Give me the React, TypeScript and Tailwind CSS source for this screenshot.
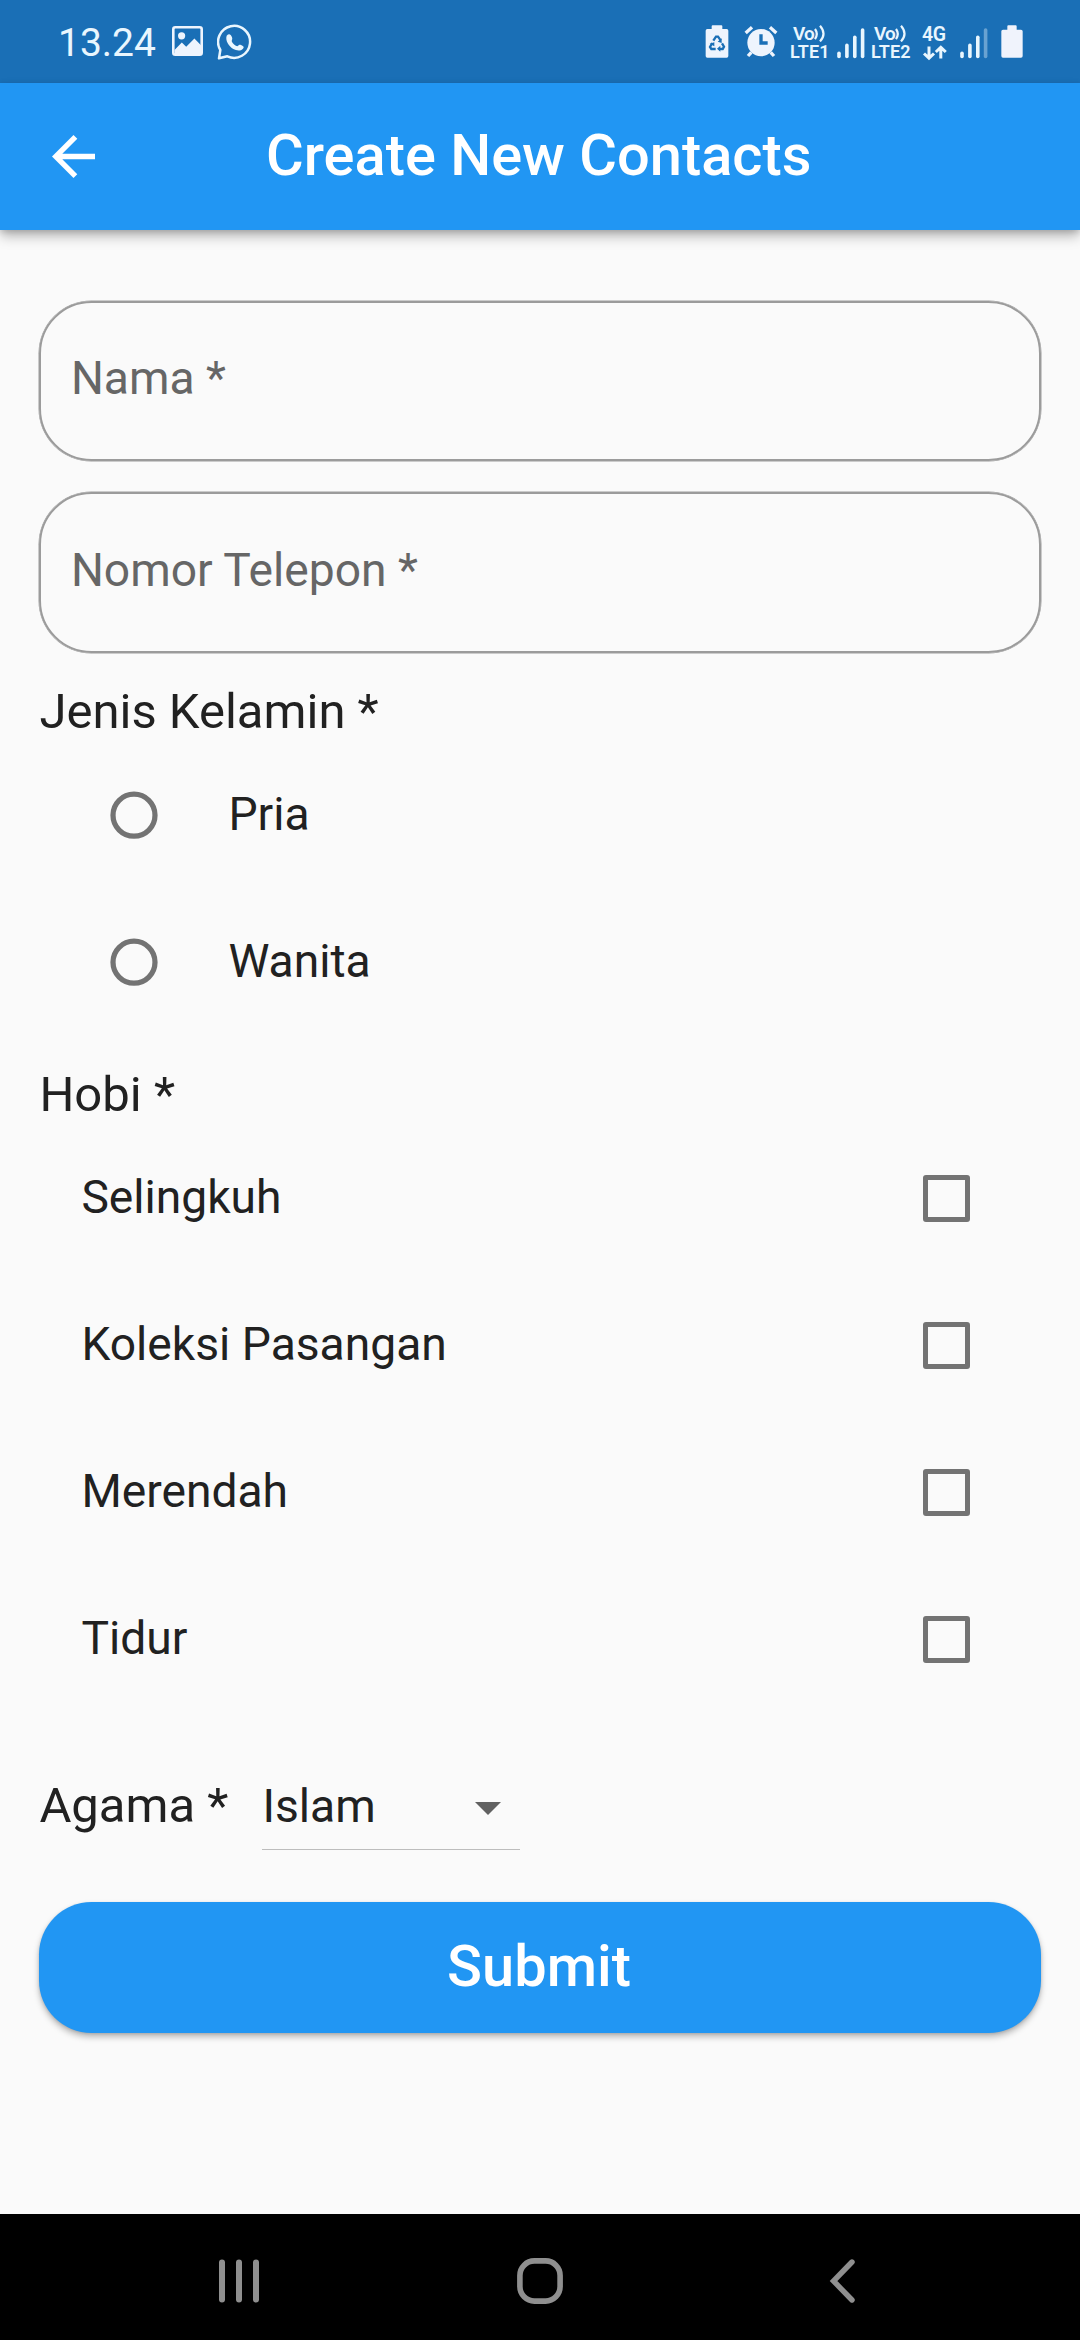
import React from "react";

function StatusImage() {
  return (
    <svg className="ml-[16px] h-[30px] w-[31px]" viewBox="0 0 31 30">
      <rect x="1.3" y="1.3" width="28.4" height="27.4" rx="2" fill="none" stroke="#eef4fd" strokeWidth="2.6" />
      <circle cx="9.6" cy="9.8" r="3.6" fill="#eef4fd" />
      <path d="M2.5 24 L9.8 16.4 L14.2 20.8 L22.4 12.6 L29 19.2 V28.5 H2.5Z" fill="#eef4fd" />
    </svg>
  );
}

function StatusWhatsapp() {
  return (
    <svg className="ml-[13.5px] h-[36px] w-[36px]" viewBox="0 0 108 108">
      <path
        d="M6 103 L10 78 A48 48 0 1 1 31 97 Z"
        fill="none"
        stroke="#e9f6fe"
        strokeWidth="7.5"
        strokeLinejoin="round"
      />
      <path
        d="M29 35 C36 28 41 30 45 40 C48 46 42 50 45 54 C49 60 55 65 61 67 C65 63 68 61 72 63 C81 68 82 69 78 74 C71 82 58 80 49 75 C36 67 24 50 29 35Z"
        fill="#e9f6fe"
      />
    </svg>
  );
}

function BatterySaver() {
  return (
    <svg className="h-[36px] w-[24px]" viewBox="0 0 72 108">
      <path d="M20 12 V4 Q20 1 23 1 H49 Q52 1 52 4 V12 H65 Q70 12 70 17 V93 Q70 98 65 98 H7 Q2 98 2 93 V17 Q2 12 7 12Z" fill="#eef4fd" />
      <g fill="none" stroke="#1a6fb6" strokeWidth="7">
        <path d="M25 47 L33 35 H39 L47 46" />
        <path d="M51 55 L57 65 L53 72 H42" />
        <path d="M32 72 H19 L15 66 L22 54" />
      </g>
      <path d="M50 40 L50 54 L38 50Z M46 62 V80 L36 71Z M14 56 L28 52 L28 64Z" fill="#1a6fb6" />
    </svg>
  );
}

function Alarm() {
  return (
    <svg className="ml-[15px] h-[36px] w-[34px]" viewBox="0 0 102 108">
      <g stroke="#eef4fd" strokeWidth="10" fill="none">
        <path d="M5 24 L24 7" />
        <path d="M78 7 L97 24" />
        <path d="M22 82 L12 93" />
        <path d="M80 82 L90 93" />
      </g>
      <circle cx="51" cy="53" r="41" fill="#eef4fd" />
      <path d="M51 28 V54 H71" fill="none" stroke="#1a6fb6" strokeWidth="10" />
    </svg>
  );
}

function VoLte({ sim, className }: { sim: string; className: string }) {
  return (
    <div className={className}>
      <div className="flex h-[17px] items-center pl-[3px]">
        <span className="text-[19px] leading-[24px] font-semibold tracking-[-1px]">Vo</span>
        <svg className="h-[17px] w-[13px] shrink-0" viewBox="0 0 13 17" fill="none" stroke="#e9f6fe" strokeWidth="2.2">
          <path d="M1 4 Q4.6 9 1 14.2" />
          <path d="M6 0.8 Q13 8.8 6 16.4" />
        </svg>
      </div>
      <div className="text-[18px] leading-[19px] font-semibold tracking-[0.1px] whitespace-nowrap">{`LTE${sim}`}</div>
    </div>
  );
}

function Signal({ className, weak }: { className: string; weak?: boolean }) {
  return (
    <svg className={className} viewBox="0 0 28 36" stroke="#e9f6fe" strokeWidth="3.6" strokeLinecap="round">
      <path d="M2 28.2 V31.4" />
      <path d="M9.9 20.4 V31.4" />
      <path d="M17.8 12.2 V31.4" />
      <path d="M25.6 5 V31.4" opacity={weak ? 0.38 : 1} />
    </svg>
  );
}

function FourG() {
  return (
    <div className="ml-[9px] h-[36px] w-[26px] text-[#e9f6fe]">
      <div className="h-[18px] text-[19.5px] leading-[20px] font-semibold tracking-[-0.4px]">4G</div>
      <svg className="h-[18px] w-[26px]" viewBox="0 18 26 18" fill="none" stroke="#e9f6fe" strokeWidth="3">
        <path d="M7 21.5 V32.5 M2 28.5 L7 33.2 L12 28.5" />
        <path d="M18.8 33.4 V23 M13.8 27 L18.8 22.4 L23.8 27" />
      </svg>
    </div>
  );
}

function Battery() {
  return (
    <svg className="ml-[13px] h-[36px] w-[22px]" viewBox="0 0 66 108">
      <path d="M19 14 V4 Q19 1 22 1 H44 Q47 1 47 4 V14 H60 Q65 14 65 19 V93 Q65 98 60 98 H6 Q1 98 1 93 V19 Q1 14 6 14Z" fill="#f0f3fc" />
    </svg>
  );
}

function Field({ label }: { label: string }) {
  return (
    <div className="flex h-[160.5px] items-center rounded-[52.5px] border-2 border-[#9b9b9b] pb-[5px] pl-[29.5px] text-[46.2px] leading-none text-[#666666] shadow-[0_0_0_0.5px_#9b9b9b]">
      {label}
    </div>
  );
}

function Heading({ children }: { children: React.ReactNode }) {
  return <h2 className="mt-[31px] flex h-[57.5px] items-center pb-px text-[49px] leading-none">{children}</h2>;
}

function RadioRow({ label }: { label: string }) {
  return (
    <div className="flex h-[147px] items-center pl-[70.6px]">
      <svg className="h-[48px] w-[48px]" viewBox="0 0 48 48">
        <circle cx="24" cy="24.2" r="21" fill="none" stroke="#737373" strokeWidth="5.25" />
      </svg>
      <span className="mb-[2px] ml-[70.4px] text-[46.2px] leading-none">{label}</span>
    </div>
  );
}

function CheckRow({ label }: { label: string }) {
  return (
    <div className="flex h-[147px] items-center justify-between pl-[42px] pr-[70.6px]">
      <span className="text-[46.2px] leading-none">{label}</span>
      <span className="mt-[2px] h-[47.25px] w-[47.25px] rounded-[3px] border-5 border-[#737373]" />
    </div>
  );
}

export default function App() {
  return (
    <div className="flex h-[2340px] w-[1080px] flex-col overflow-hidden bg-[#fafafa] font-[Roboto,sans-serif] text-[#212121]">
      <div className="flex h-[83px] shrink-0 items-start justify-between bg-[#1a6fb6] pl-[58px] pr-[57px]">
        <div className="flex">
          <span className="mt-[23px] w-[98px] text-[39px] leading-[41px] text-[#e9f6fe]">13.24</span>
          <div className="mt-[26px]"><StatusImage /></div>
          <div className="mt-[24px]"><StatusWhatsapp /></div>
        </div>
        <div className="mt-[25px] flex">
          <BatterySaver />
          <Alarm />
          <VoLte sim="1" className="ml-[12px] h-[36px] w-[42px] text-[#e9f6fe]" />
          <Signal className="ml-[5px] h-[36px] w-[28px]" />
          <VoLte sim="2" className="ml-[6px] h-[36px] w-[42px] text-[#e9f6fe]" />
          <FourG />
          <Signal weak className="ml-[12px] h-[36px] w-[28px]" />
          <Battery />
        </div>
      </div>

      <header className="relative flex h-[147px] shrink-0 items-center bg-[#2196f3] pl-[52px] shadow-[0_7px_12px_-1px_rgba(0,0,0,0.28),0_2px_6px_rgba(0,0,0,0.14)]">
        <svg className="h-[43px] w-[43px]" viewBox="4 4 16 16" fill="#ffffff">
          <path d="M20 11H7.83l5.59-5.59L12 4l-8 8 8 8 1.41-1.41L7.83 13H20v-2z" />
        </svg>
        <h1 className="mb-px ml-[171px] text-[57.75px] leading-none font-medium whitespace-nowrap text-white">
          Create New Contacts
        </h1>
      </header>

      <main className="flex-1 px-[39.4px] pt-[70.7px]">
        <div className="flex flex-col gap-[31px]">
          <Field label="Nama *" />
          <Field label="Nomor Telepon *" />
        </div>

        <Heading>Jenis Kelamin *</Heading>
        <RadioRow label="Pria" />
        <RadioRow label="Wanita" />

        <Heading>Hobi *</Heading>
        <CheckRow label="Selingkuh" />
        <CheckRow label="Koleksi Pasangan" />
        <CheckRow label="Merendah" />
        <CheckRow label="Tidur" />

        <div className="mt-[31px] flex h-[126px] items-center">
          <span className="w-[223px] text-[49px] leading-none">Agama *</span>
          <div className="flex h-[88px] w-[258px] items-center justify-between border-b border-[#bdbdbd] pr-[19px]">
            <span className="mt-[2px] text-[46.2px] leading-none">Islam</span>
            <svg className="mt-[6px] h-[13px] w-[26px]" viewBox="0 0 10 5" fill="#616161">
              <path d="M0 0l5 5 5-5z" />
            </svg>
          </div>
        </div>

        <button className="mt-[33px] flex h-[131.25px] w-full items-center justify-center rounded-[52.5px] bg-[#2196f3] pr-[2px] pb-px text-[57.75px] leading-none font-medium text-white shadow-[0_4px_6px_rgba(0,0,0,0.26),0_1px_3px_rgba(0,0,0,0.12)]">
          Submit
        </button>
      </main>

      <nav className="grid h-[126px] shrink-0 grid-cols-3 place-items-center bg-black px-[88px] pt-[7px]">
        <svg className="h-[46px] w-[46px]" viewBox="0 0 46 46" stroke="#8f8f8f" strokeWidth="6" strokeLinecap="round">
          <path d="M6 4.5 V41.5 M23 4.5 V41.5 M40 4.5 V41.5" />
        </svg>
        <svg className="h-[46px] w-[46px]" viewBox="0 0 46 46" fill="none" stroke="#8f8f8f" strokeWidth="5.6">
          <rect x="2.9" y="2.9" width="40.2" height="40.2" rx="14.5" />
        </svg>
        <svg className="h-[46px] w-[28px]" viewBox="0 0 28 46" fill="none" stroke="#8f8f8f" strokeWidth="5.4" strokeLinecap="round">
          <path d="M25 4 L6.5 23 L25 42" />
        </svg>
      </nav>
    </div>
  );
}
